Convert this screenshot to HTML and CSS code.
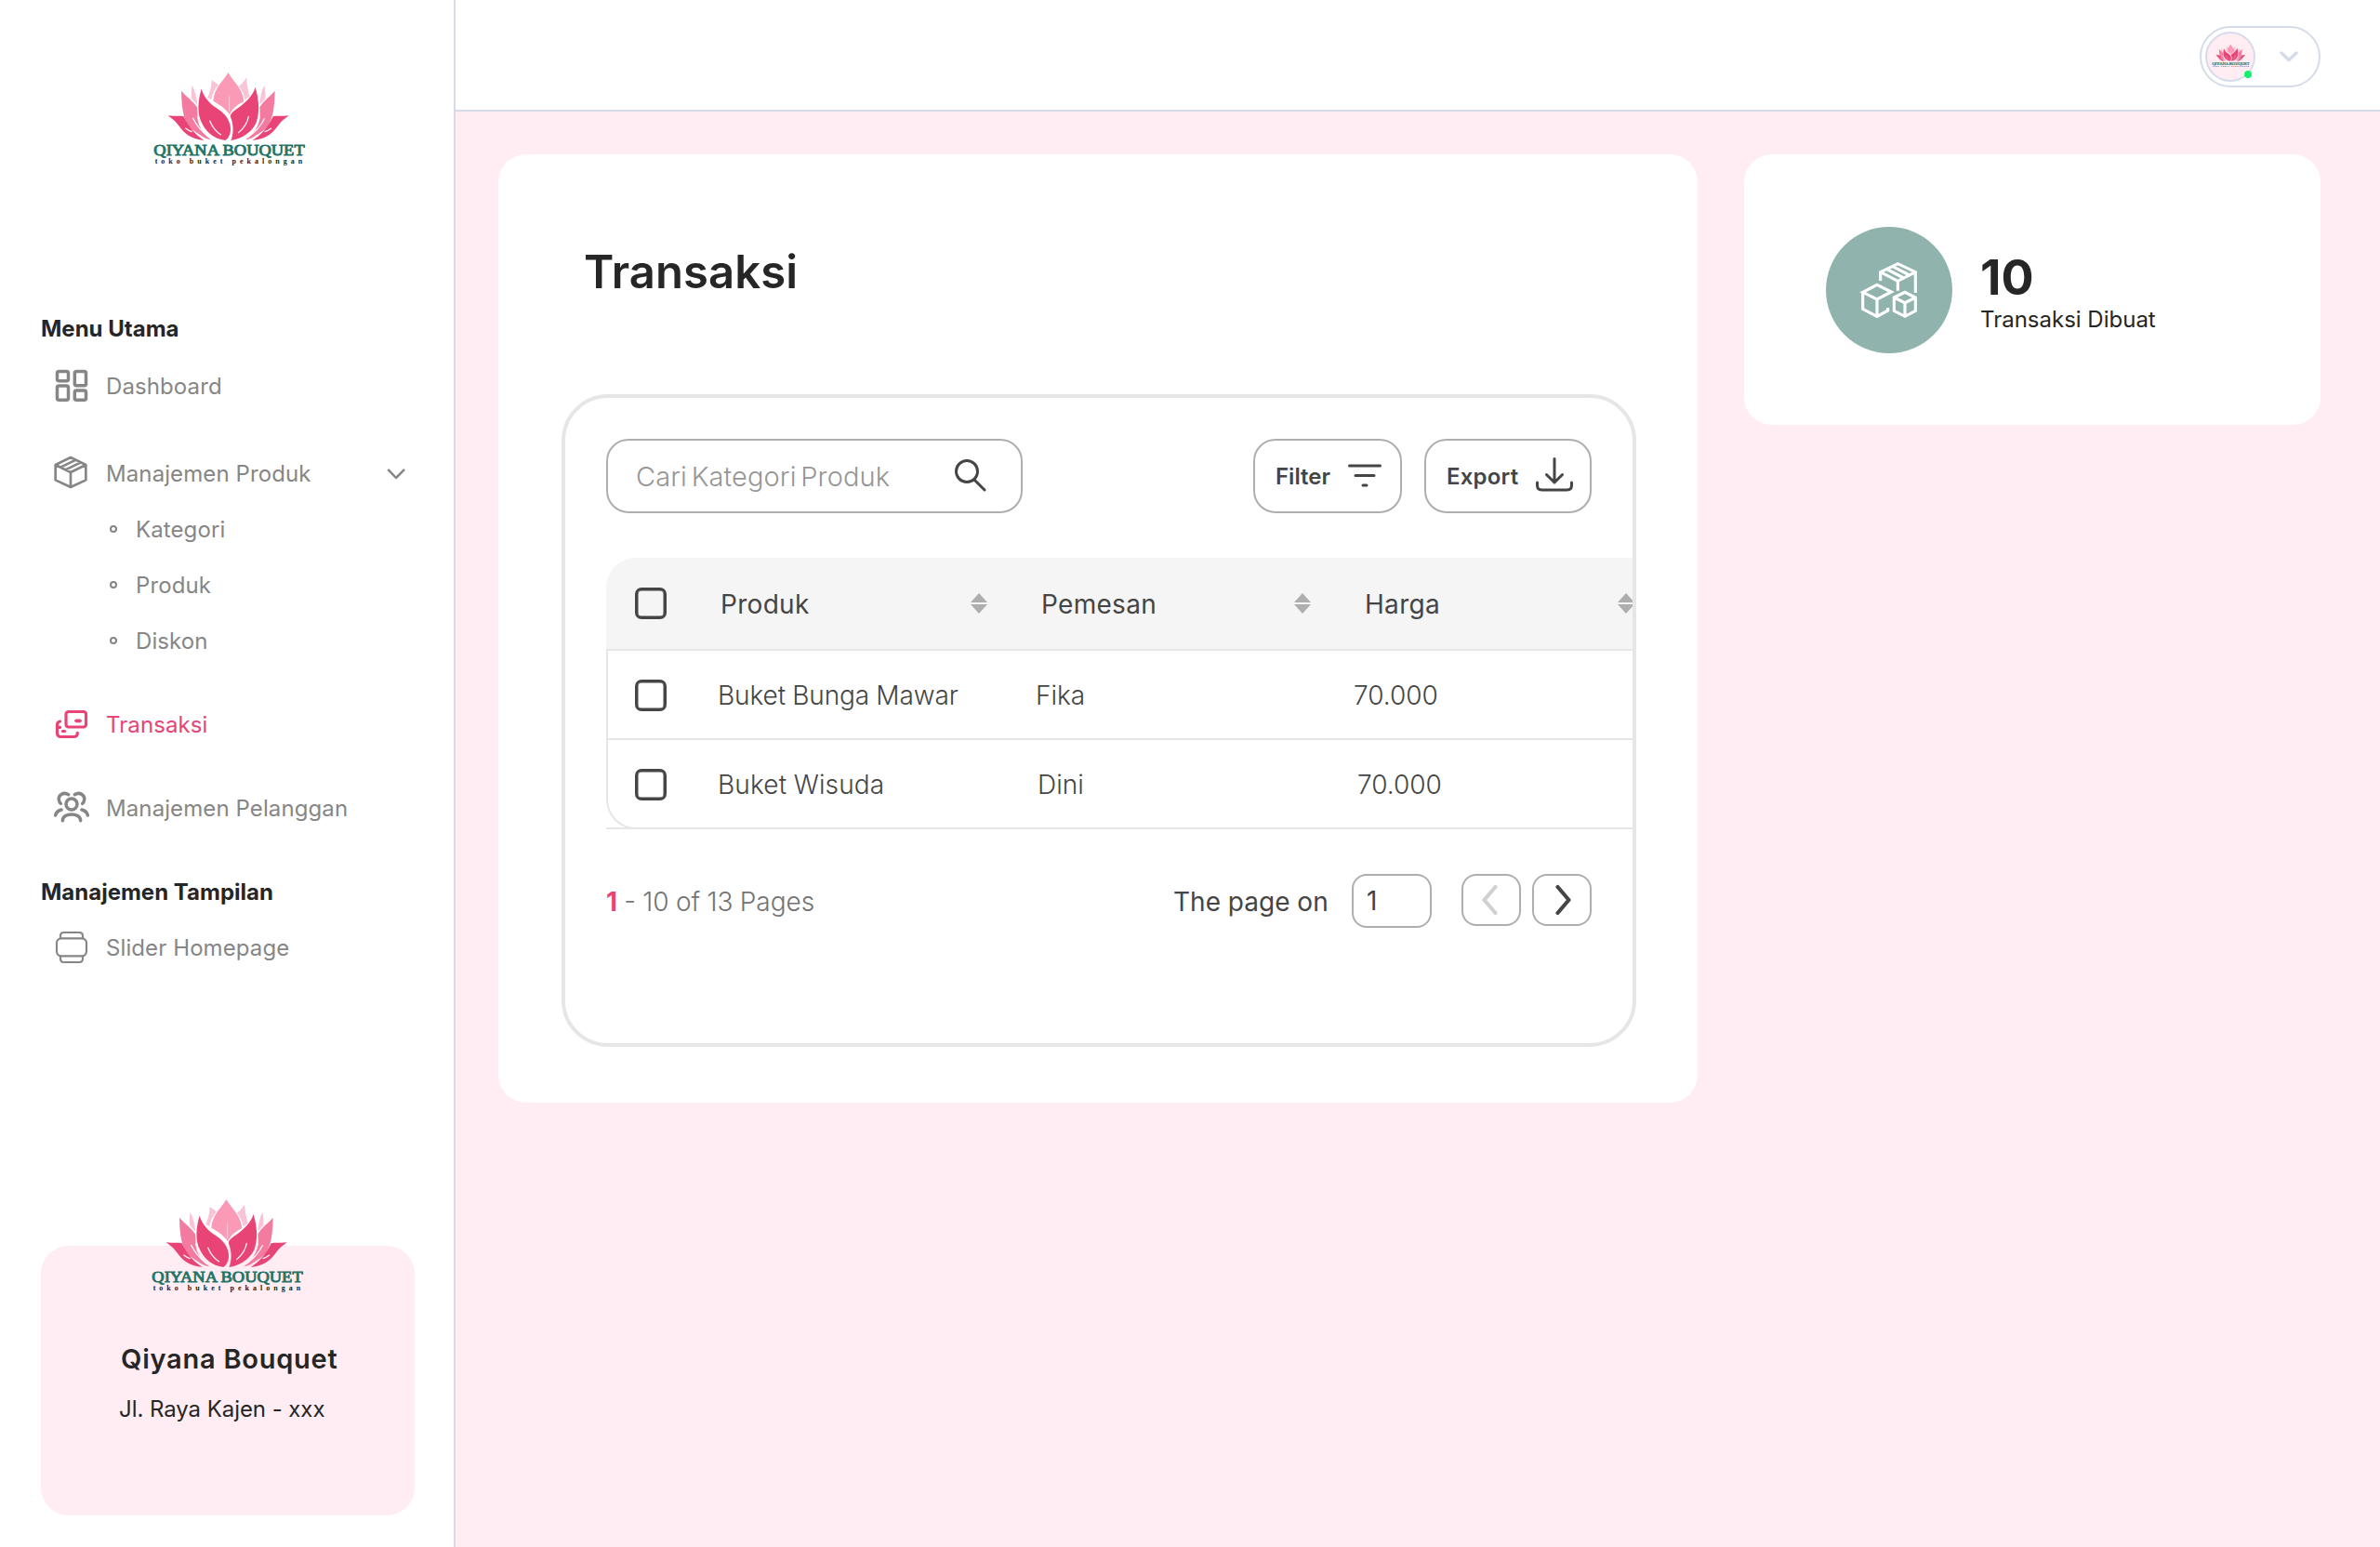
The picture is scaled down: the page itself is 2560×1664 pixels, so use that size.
FILE: index.html
```html
<!DOCTYPE html>
<html lang="id">
<head>
<meta charset="utf-8">
<title>Transaksi - Qiyana Bouquet</title>
<link rel="stylesheet" href="styles.css">
</head>
<body>
<svg class="defs" width="0" height="0" aria-hidden="true">
  <symbol id="logo" viewBox="70 45 500 315" overflow="visible">
    <g fill="#f9c5d6">
      <path d="M264 78C263 100 259 118 251 135L263 142C266 122 275 106 286 94Z"/>
      <path d="M201 95C198 110 198 125 199 138L218 158C216 135 210 112 201 95Z"/>
      <path d="M376 70C374 78 360 92 352 98C362 110 369 125 371 142L387 132C381 112 378 92 376 70Z"/>
      <path d="M434 95C437 110 438 125 437 138L419 158C420 135 425 112 434 95Z"/>
    </g>
    <path fill="#fa9ab7" d="M317 54C302 82 272 102 269 146C290 158 312 172 322 190C330 172 345 158 368 148C364 104 334 84 317 54Z"/>
    <g fill="#f37ba0">
      <path d="M166 113C167 165 172 222 208 243C228 256 245 270 262 271C238 252 222 232 218 200C219 190 219 180 217 166C203 145 182 132 166 113Z"/>
      <path d="M468 113C467 165 462 222 428 243C408 256 391 270 374 271C398 252 414 232 420 200C420 190 420 180 419 166C431 145 452 132 468 113Z"/>
    </g>
    <g fill="#e84476">
      <path d="M231 107C220 142 216 188 232 216C245 245 270 268 308 273C324 262 329 240 322 218C315 196 300 182 280 169C258 155 240 135 231 107Z"/>
      <path d="M405 102C396 130 375 150 350 168C330 181 321 190 326 200C336 225 334 255 326 273C362 268 395 245 408 215C420 180 416 140 405 102Z"/>
      <path d="M123 193C140 205 150 215 158 226C176 252 200 270 240 273C215 258 190 232 174 196C158 192 140 196 123 193Z"/>
      <path d="M513 193C496 205 486 215 478 226C460 252 436 270 396 273C421 258 446 232 462 196C478 192 496 196 513 193Z"/>
    </g>
    <g fill="none" stroke="#fff" stroke-width="3.5" stroke-linecap="round">
      <path d="M258 210Q270 240 294 255M383 196Q378 225 351 248M204 202Q220 236 254 262M434 203Q418 236 382 262M180 234Q190 242 200 245M456 234Q446 242 436 245"/>
    </g>
    <path fill="none" stroke="#f8c9d8" stroke-width="3" d="M321 130V180"/>
    <text class="logo-name" x="77" y="320" textLength="487" lengthAdjust="spacingAndGlyphs">QIYANA BOUQUET</text>
    <text class="logo-tag" x="81" y="349" textLength="476">toko buket pekalongan</text>
  </symbol>
</svg>

<div class="app">
  <aside class="sidebar">
    <svg class="logo"><use href="#logo"/></svg>
    <nav class="menu">
      <h2 class="menu-title">Menu Utama</h2>
      <a class="item">
        <svg class="icon" viewBox="84 228 114 114" stroke-width="10.500"><rect x="94.500" y="238.500" width="36" height="31" rx="6"/><rect x="151" y="238.500" width="36.500" height="46" rx="6"/><rect x="94.500" y="285" width="36" height="46" rx="6"/><rect x="151" y="300" width="36.500" height="31" rx="6"/></svg>
        <span>Dashboard</span>
      </a>
      <a class="item item--group">
        <svg class="icon" viewBox="84 510 114 114" stroke-width="8" stroke-linejoin="round"><path d="M138 516L187 540V589L138 612L89 589V540ZM89 540L138 564L187 540M138 564V612M105 548L155 524M121 556L171 532"/></svg>
        <span>Manajemen Produk</span>
        <svg class="caret" viewBox="1155 540 66 54"><path d="M1164 557L1188 582L1213 557"/></svg>
      </a>
      <a class="item item--sub"><i class="bullet"></i><span>Kategori</span></a>
      <a class="item item--sub"><i class="bullet"></i><span>Produk</span></a>
      <a class="item item--sub"><i class="bullet"></i><span>Diskon</span></a>
      <a class="item item--spaced item--active">
        <svg class="icon" viewBox="84 60 114 114" stroke-width="9.500" stroke-linecap="round"><rect x="123" y="76.500" width="64.500" height="49.500" rx="8"/><path d="M104 108Q94.500 109 94.500 120V145Q94.500 157.500 107 157.500H148Q160 157.500 160 145M94.500 127H104M112 139.500H119"/><path stroke-width="11" d="M156 106H168"/></svg>
        <span>Transaksi</span>
      </a>
      <a class="item item--spaced">
        <svg class="icon" viewBox="84 330 114 114" stroke-width="10.500" stroke-linecap="round"><circle cx="141" cy="375" r="18"/><path d="M112 428C113 401 169 401 170 428M131 344C115 334 95 346 101 365Q102 370 106 373M151 344C167 334 187 346 181 365Q180 370 176 373M108 393Q92 397 89 411M174 393Q190 397 193 411"/></svg>
        <span>Manajemen Pelanggan</span>
      </a>
      <h2 class="menu-title menu-title--spaced">Manajemen Tampilan</h2>
      <a class="item item--last">
        <svg class="icon" viewBox="84 780 114 114" stroke-width="6.500"><rect x="93" y="808" width="96" height="57" rx="15"/><path d="M105 808V800Q105 789 116 789H166Q177 789 177 800V808M105 865V874Q105 885 116 885H166Q177 885 177 874V865"/></svg>
        <span>Slider Homepage</span>
      </a>
    </nav>
    <section class="store">
      <svg class="logo logo--store"><use href="#logo"/></svg>
      <h3 class="store-name">Qiyana Bouquet</h3>
      <p class="store-address">Jl. Raya Kajen - xxx</p>
    </section>
  </aside>

  <header class="topbar">
    <div class="account">
      <div class="avatar"><svg class="avatar-logo"><use href="#logo"/></svg><i class="online"></i></div>
      <svg class="account-caret" viewBox="0 0 22 14"><path d="M3 3L11 10.500L19 3"/></svg>
    </div>
  </header>

  <main class="content">
    <section class="card">
      <h1 class="title">Transaksi</h1>
      <div class="panel">
        <div class="toolbar">
          <div class="search">
            <span>Cari Kategori Produk</span>
            <svg class="search-icon" viewBox="0 0 34 36"><circle cx="13" cy="14" r="11.500"/><path d="M21 23L32 34"/></svg>
          </div>
          <button class="btn btn--filter"><span>Filter</span>
            <svg width="36" height="26" viewBox="0 0 36 26"><path d="M1.500 2H34.500M8 12.500H28M16 23H20"/></svg>
          </button>
          <button class="btn btn--export"><span>Export</span>
            <svg width="40" height="37" viewBox="0 0 40 37"><path d="M20 1.500V27M11.500 18.500L20 27L28.500 18.500M1.500 27V30Q1.500 35 6.500 35H33.500Q38.500 35 38.500 30V27"/></svg>
          </button>
        </div>

        <div class="table">
          <div class="thead">
            <i class="check"></i>
            <div class="th"><span>Produk</span><svg class="sort" viewBox="0 0 18 22"><path d="M9 0L18 10H0ZM0 12H18L9 22Z"/></svg></div>
            <div class="th"><span>Pemesan</span><svg class="sort" viewBox="0 0 18 22"><path d="M9 0L18 10H0ZM0 12H18L9 22Z"/></svg></div>
            <div class="th"><span>Harga</span><svg class="sort" viewBox="0 0 18 22"><path d="M9 0L18 10H0ZM0 12H18L9 22Z"/></svg></div>
          </div>
          <div class="tbody">
            <div class="tr"><i class="check"></i><span class="product">Buket Bunga Mawar</span><span class="buyer">Fika</span><span class="price">70.000</span></div>
            <div class="tr tr--last"><i class="check"></i><span class="product">Buket Wisuda</span><span class="buyer">Dini</span><span class="price">70.000</span></div>
          </div>
        </div>

        <div class="pager">
          <p class="range"><b>1</b> - 10 of 13 Pages</p>
          <span class="page-label">The page on</span>
          <div class="page-input">1</div>
          <button class="page-btn page-btn--off"><svg width="20" height="34" viewBox="0 0 20 34"><path d="M14.500 3L2.500 17L14.500 31"/></svg></button>
          <button class="page-btn"><svg width="20" height="34" viewBox="0 0 20 34"><path d="M5.500 3L17.500 17L5.500 31"/></svg></button>
        </div>
      </div>
    </section>

    <section class="stat">
      <div class="stat-icon">
        <svg width="64" height="64" viewBox="120 120 192 192"><path d="M188 186V158L244 131L301 158V225M188 158L244 187L301 158M244 187V218M207 148L263 177M226 139L282 168M131 223L177 199L223 222L177 246ZM131 223V277L177 301L212 282V273M177 246V301M232 240L267 223L301 240V283L267 301L232 283ZM232 240L267 257L301 240M267 257V301"/></svg>
      </div>
      <div class="stat-text">
        <strong>10</strong>
        <p>Transaksi Dibuat</p>
      </div>
    </section>
  </main>
</div>
</body>
</html>
```
FILE: styles.css
```css
* { box-sizing: border-box; }

body {
  margin: 0;
  font-family: Inter, "Liberation Sans", sans-serif;
  font-size: 24px;
  color: #262626;
}

h1, h2, h3, p { margin: 0; }

span { white-space: nowrap; }

button {
  padding: 0;
  background: none;
  font-family: inherit;
  color: inherit;
}

.defs { position: absolute; }

.app {
  display: grid;
  grid-template-columns: 490px 1fr;
  grid-template-rows: 120px 1fr;
  width: 2560px;
  height: 1664px;
  background: #ffedf3;
}

/* Sidebar */
.sidebar {
  grid-row: 1 / 3;
  display: flex;
  flex-direction: column;
  padding: 75px 42px 34px 44px;
  background: #fff;
  border-right: 2px solid #d5dbe8;
}

.logo {
  display: block;
  flex: none;
  width: 166.67px;
  height: 105px;
  margin-left: 119.3px;
  overflow: visible;
}

.logo-name {
  font: 400 53px "Liberation Serif", serif;
  fill: #1f7467;
  stroke: #1f7467;
  stroke-width: 2.8;
}

.logo-tag {
  font: 700 24px "Liberation Serif", serif;
  fill: #1c1c1c;
}

.menu {
  display: flex;
  flex-direction: column;
  margin-top: 143px;
}

.menu-title {
  height: 60px;
  padding-top: 1px;
  font-size: 24px;
  font-weight: 700;
  line-height: 60px;
}

.item {
  display: flex;
  align-items: center;
  height: 60px;
  margin-top: 2px;
  padding-left: 14px;
  color: #868686;
}

.item span {
  padding-top: 2px;
  line-height: 58px;
  letter-spacing: 0.100px;
}

.icon {
  width: 38px;
  height: 38px;
  margin-right: 18px;
  fill: none;
  stroke: currentColor;
}

.item--group { margin-top: 34px; padding-right: 9px; }
.item--sub { margin-top: 0; padding-left: 74px; }
.item--spaced, .menu-title--spaced { margin-top: 30px; }
.item--last { margin-top: 0; }
.item--active { color: #e84476; }

.caret {
  width: 22px;
  height: 18px;
  margin-left: auto;
  fill: none;
  stroke: #868686;
  stroke-width: 7.500;
  stroke-linecap: round;
  stroke-linejoin: round;
}

.bullet {
  width: 8px;
  height: 8px;
  margin-right: 20px;
  border: 2px solid #868686;
  border-radius: 50%;
}

.store {
  height: 290px;
  width: 402px;
  margin-top: auto;
  border-radius: 30px;
  background: #ffedf3;
}

.logo--store {
  margin: -53px 0 0 117.3px;
}

.store-name {
  margin: 50px 0 0 86px;
  font-size: 29px;
  font-weight: 600;
  line-height: 40px;
  letter-spacing: 0.750px;
}

.store-address {
  margin: 14px 0 0 84px;
  line-height: 40px;
  letter-spacing: -0.060px;
}

/* Top bar */
.topbar {
  display: flex;
  justify-content: flex-end;
  padding: 28px 64px 0 0;
  background: #fff;
  border-bottom: 2px solid #d5dbe8;
}

.account {
  display: flex;
  align-items: center;
  width: 130px;
  height: 66px;
  padding-left: 4px;
  border: 2px solid #d5dbe8;
  border-radius: 33px;
}

.avatar {
  position: relative;
  width: 54px;
  height: 54px;
  border: 2px solid #d5dbe8;
  border-radius: 50%;
  background: #ffedf3;
}

.avatar-logo {
  display: block;
  width: 41px;
  height: 26px;
  margin: 11px 0 0 5px;
  overflow: visible;
}

.online {
  position: absolute;
  left: 40px;
  top: 40px;
  width: 8px;
  height: 8px;
  border-radius: 50%;
  background: #14f06e;
}

.account-caret {
  width: 22px;
  height: 14px;
  margin-left: 25px;
  fill: none;
  stroke: #d5dbe8;
  stroke-width: 3.500;
  stroke-linecap: round;
  stroke-linejoin: round;
}

/* Content */
.content {
  display: flex;
  align-items: flex-start;
  gap: 50px;
  padding: 46px 64px 0 46px;
}

.card {
  width: 1290px;
  height: 1020px;
  padding: 96px 66px 0 68px;
  border-radius: 30px;
  background: #fff;
}

.title {
  padding-left: 24px;
  font-size: 49px;
  font-weight: 600;
  line-height: 62px;
  letter-spacing: 0.100px;
}

.panel {
  width: 1156px;
  height: 702px;
  margin-top: 100px;
  padding: 44px 0 0 44px;
  border: 4px solid #e6e6e6;
  border-radius: 50px;
  overflow: hidden;
  color: #454545;
}

.toolbar { display: flex; }

.search, .btn, .page-input, .page-btn {
  display: flex;
  align-items: center;
  border: 2px solid #aeaeae;
}

.search {
  width: 448px;
  height: 80px;
  padding-left: 30px;
  border-radius: 24px;
  color: #969696;
  font-size: 29px;
  font-weight: 300;
  word-spacing: -3.500px;
  letter-spacing: 0.100px;
}

.search-icon {
  width: 34px;
  height: 36px;
  margin: 0 37px 3px auto;
}

.search-icon, .btn svg, .page-btn svg {
  fill: none;
  stroke: #454545;
  stroke-width: 3;
  stroke-linecap: round;
  stroke-linejoin: round;
}

.btn {
  height: 80px;
  justify-content: space-between;
  border-radius: 24px;
  font-size: 24px;
  font-weight: 600;
}

.btn--filter { width: 160px; margin-left: 248px; padding: 0 20px 0 22px; }
.btn--export { width: 180px; margin-left: 24px; padding: 0 18px 0 22px; letter-spacing: 0.200px; }
.btn--filter svg { margin-bottom: 1px; }
.btn--export svg { margin-bottom: 4px; }

.table {
  width: 1200px;
  margin-top: 48px;
  font-size: 28px;
}

.thead {
  display: grid;
  grid-template-columns: 94px 345px 348px 288px;
  align-items: center;
  height: 98px;
  padding-left: 31px;
  border-radius: 32px 0 0 0;
  background: #f5f5f5;
}

.th {
  display: flex;
  align-items: center;
  justify-content: space-between;
  padding: 2px 60px 0 0;
}

.th span {
  margin-left: -2px;
  letter-spacing: 0.300px;
}

.th:last-child { padding-right: 0; }

.sort {
  width: 18px;
  height: 22px;
  margin-bottom: 2px;
  fill: #aeaeae;
}

.check {
  width: 34px;
  height: 34px;
  border: 3px solid #454545;
  border-radius: 7px;
  box-shadow: inset 0 0 0 0.500px #454545;
}

.tbody {
  border-top: 2px solid #e6e6e6;
  border-bottom: 2px solid #e6e6e6;
  font-weight: 300;
}

.tr {
  display: grid;
  grid-template-columns: 89px 342px 342px 1fr;
  align-items: center;
  height: 96px;
  padding: 2px 0 0 29px;
  border-left: 2px solid #e6e6e6;
  border-bottom: 2px solid #e6e6e6;
}

.product { letter-spacing: -0.100px; word-spacing: -0.500px; }

.tr--last {
  grid-template-columns: 89px 344px 344px 1fr;
  border-radius: 0 0 0 32px;
  margin-bottom: -2px;
}

.tr--last .product { letter-spacing: 0.150px; }

.pager {
  display: flex;
  align-items: flex-start;
  padding-top: 48px;
  font-size: 28px;
  line-height: 60px;
}

.range {
  width: 610px;
  color: #737373;
  font-weight: 300;
  word-spacing: -0.600px;
}

.range b { font-weight: 700; color: #e84476; }

.page-label { width: 192px; }

.page-input {
  width: 86px;
  height: 58px;
  padding-left: 14px;
  border-radius: 16px;
}

.page-btn {
  justify-content: center;
  width: 64px;
  height: 56px;
  margin-left: 12px;
  border-radius: 16px;
}

.page-btn svg { stroke-width: 4.200; }
.page-btn--off { margin-left: 32px; }
.page-btn--off svg { stroke: #d0d0d0; }

/* Stat card */
.stat {
  display: flex;
  width: 620px;
  height: 291px;
  padding: 78px 0 0 88px;
  border-radius: 30px;
  background: #fff;
}

.stat-icon {
  display: flex;
  align-items: center;
  justify-content: center;
  width: 136px;
  height: 136px;
  border-radius: 50%;
  background: #90b4ad;
}

.stat-icon svg {
  fill: none;
  stroke: #fff;
  stroke-width: 9.500;
}

.stat-text { margin-left: 30px; padding-top: 24px; }

.stat-text strong {
  display: block;
  font-size: 52px;
  font-weight: 700;
  line-height: 62px;
}

.stat-text p { line-height: 28px; }
```
